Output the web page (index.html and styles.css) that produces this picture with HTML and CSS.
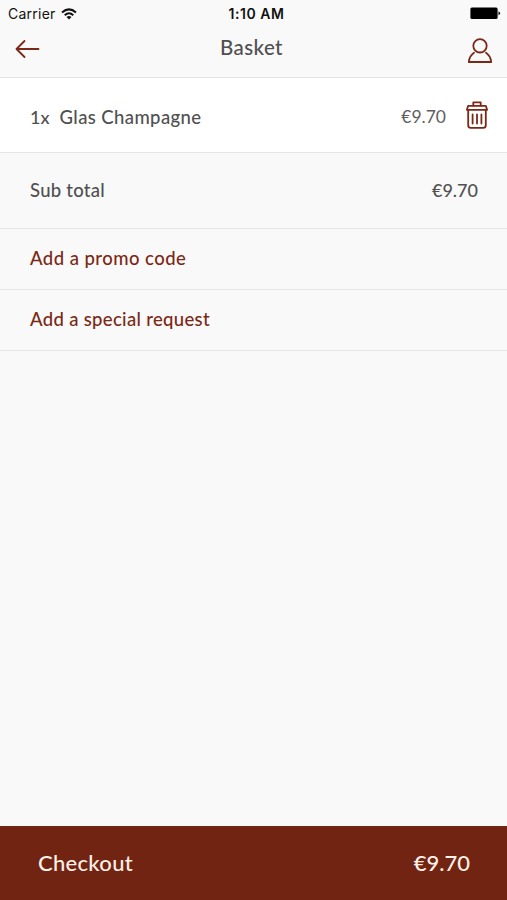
FILE: index.html
```html
<!DOCTYPE html>
<html lang="en">
<head>
  <meta charset="UTF-8">
  <meta name="viewport" content="width=device-width, initial-scale=1.0">
  <title>Basket</title>
  <link rel="stylesheet" href="styles.css">
</head>
<body>
  <div class="app">
    <header class="header">
      <div class="status-bar">
        <div class="carrier">
          <span class="carrier-name">Carrier</span>
          <svg class="wifi" width="16" height="12" viewBox="0 0 16 12" fill="none" stroke="#111" stroke-width="2">
            <path d="M1 4.5 Q8 -1.8 15 4.5"/>
            <path d="M3.7 7.2 Q8 3.4 12.3 7.2"/>
            <path d="M8 11.6 L5.5 9 Q8 7.2 10.5 9 Z" fill="#111" stroke="none"/>
          </svg>
        </div>
        <span class="time">1:10 AM</span>
        <svg class="battery" width="31" height="13" viewBox="0 0 31 13">
          <rect x="0.4" y="0.5" width="27.2" height="11.6" rx="1.5"/>
          <path d="M28.5 4.3 Q31.5 6.3 28.5 8.4 Z"/>
        </svg>
      </div>
      <div class="nav-bar">
        <button class="icon-button" id="back" aria-label="Back">
          <svg width="26" height="20" viewBox="0 0 26 20">
            <path d="M24.5 10 H2.5 M10.5 2 L2.5 10 L10.5 18"/>
          </svg>
        </button>
        <h1>Basket</h1>
        <button class="icon-button profile" id="profile" aria-label="Profile">
          <svg width="26" height="28" viewBox="0 0 26 28">
            <circle cx="13" cy="8.8" r="6.7"/>
            <path d="M7 15.8 C3.8 18 2.2 21 1.8 25 H24.2 C23.8 21 22.2 18 19 15.8"/>
          </svg>
        </button>
      </div>
    </header>

    <main class="basket">
      <div class="row item">
        <span class="quantity">1x</span>
        <span class="name">Glas Champagne</span>
        <span class="price">€9.70</span>
        <button class="icon-button remove" id="remove" aria-label="Remove">
          <svg width="24" height="30" viewBox="0 0 24 30">
            <path d="M8.3 5.5 V2.3 H15.7 V5.5"/>
            <path d="M3.2 5.8 H20.8 L22.1 9.8 H1.9 Z"/>
            <path d="M3.2 10 V25.3 Q3.2 27.9 5.8 27.9 H18.2 Q20.8 27.9 20.8 25.3 V10"/>
            <path d="M7.6 14.5 V23.5 M12 14.5 V23.5 M16.4 14.5 V23.5"/>
          </svg>
        </button>
      </div>
      <div class="row subtotal">
        <span class="label">Sub total</span>
        <span class="amount">€9.70</span>
      </div>
      <a class="row link promo">Add a promo code</a>
      <a class="row link request">Add a special request</a>
    </main>

    <footer class="checkout">
      <span class="checkout-label">Checkout</span>
      <span class="checkout-total">€9.70</span>
    </footer>
  </div>
</body>
</html>
```
FILE: styles.css
```css
* {
  box-sizing: border-box;
}

body {
  margin: 0;
  font-family: Lato, sans-serif;
  font-weight: 500;
  font-size: 18px;
  color: #505050;
  background-color: #f9f9f9;
}

.app {
  display: flex;
  flex-direction: column;
  height: 900px;
}

.header {
  height: 78px;
  border-bottom: 1px solid #e4e4e4;
}

.status-bar {
  display: grid;
  grid-template-columns: 1fr auto 1fr;
  align-items: center;
  height: 27px;
  padding: 0 6px 0 8px;
  font-family: Inter, sans-serif;
  font-size: 14px;
  color: #111;
}

.carrier {
  display: flex;
  align-items: center;
  gap: 5px;
  font-weight: 400;
  letter-spacing: 0.25px;
}

.time {
  margin-left: 4px;
  font-weight: 600;
  letter-spacing: 0.55px;
}

.battery {
  justify-self: end;
}

.nav-bar {
  display: flex;
  align-items: center;
  justify-content: space-between;
  height: 44px;
  padding: 0 14px;
}

h1 {
  margin: 0 4px 4px 0;
  font-size: 20.5px;
  font-weight: 500;
  line-height: 24px;
  letter-spacing: 0.4px;
}

.icon-button {
  display: flex;
  padding: 0;
  border: none;
  background: none;
  cursor: pointer;
}

.icon-button svg {
  fill: none;
  stroke: #7b2816;
  stroke-width: 1.8;
  stroke-linecap: round;
  stroke-linejoin: round;
}

.profile {
  padding-top: 4px;
}

.remove {
  padding-bottom: 3px;
}

.row {
  display: flex;
  align-items: center;
  padding: 0 29px 0 30px;
  border-bottom: 1px solid #e6e6e6;
}

.item {
  height: 75px;
  padding-top: 3px;
  padding-right: 18px;
  background-color: #fff;
}

.name {
  margin-left: 10px;
  font-size: 18.5px;
  letter-spacing: 0.4px;
}

.price {
  margin-left: auto;
  margin-right: 19px;
  font-size: 17.5px;
  font-weight: 400;
  color: #606060;
}

.subtotal {
  justify-content: space-between;
  height: 76px;
  padding-bottom: 2px;
}

.label {
  font-size: 18.5px;
  letter-spacing: 0.25px;
}

.link {
  height: 61px;
  padding-bottom: 2px;
  font-size: 18.5px;
  color: #7b2816;
  letter-spacing: 0.45px;
  cursor: pointer;
}

.request {
  letter-spacing: 0.32px;
}

.checkout {
  display: flex;
  align-items: center;
  justify-content: space-between;
  height: 74px;
  margin-top: auto;
  padding: 0 37px 2px 38px;
  font-size: 22px;
  color: #fff0e8;
  background-color: #722412;
}

.checkout-label {
  letter-spacing: 0.3px;
}
```
